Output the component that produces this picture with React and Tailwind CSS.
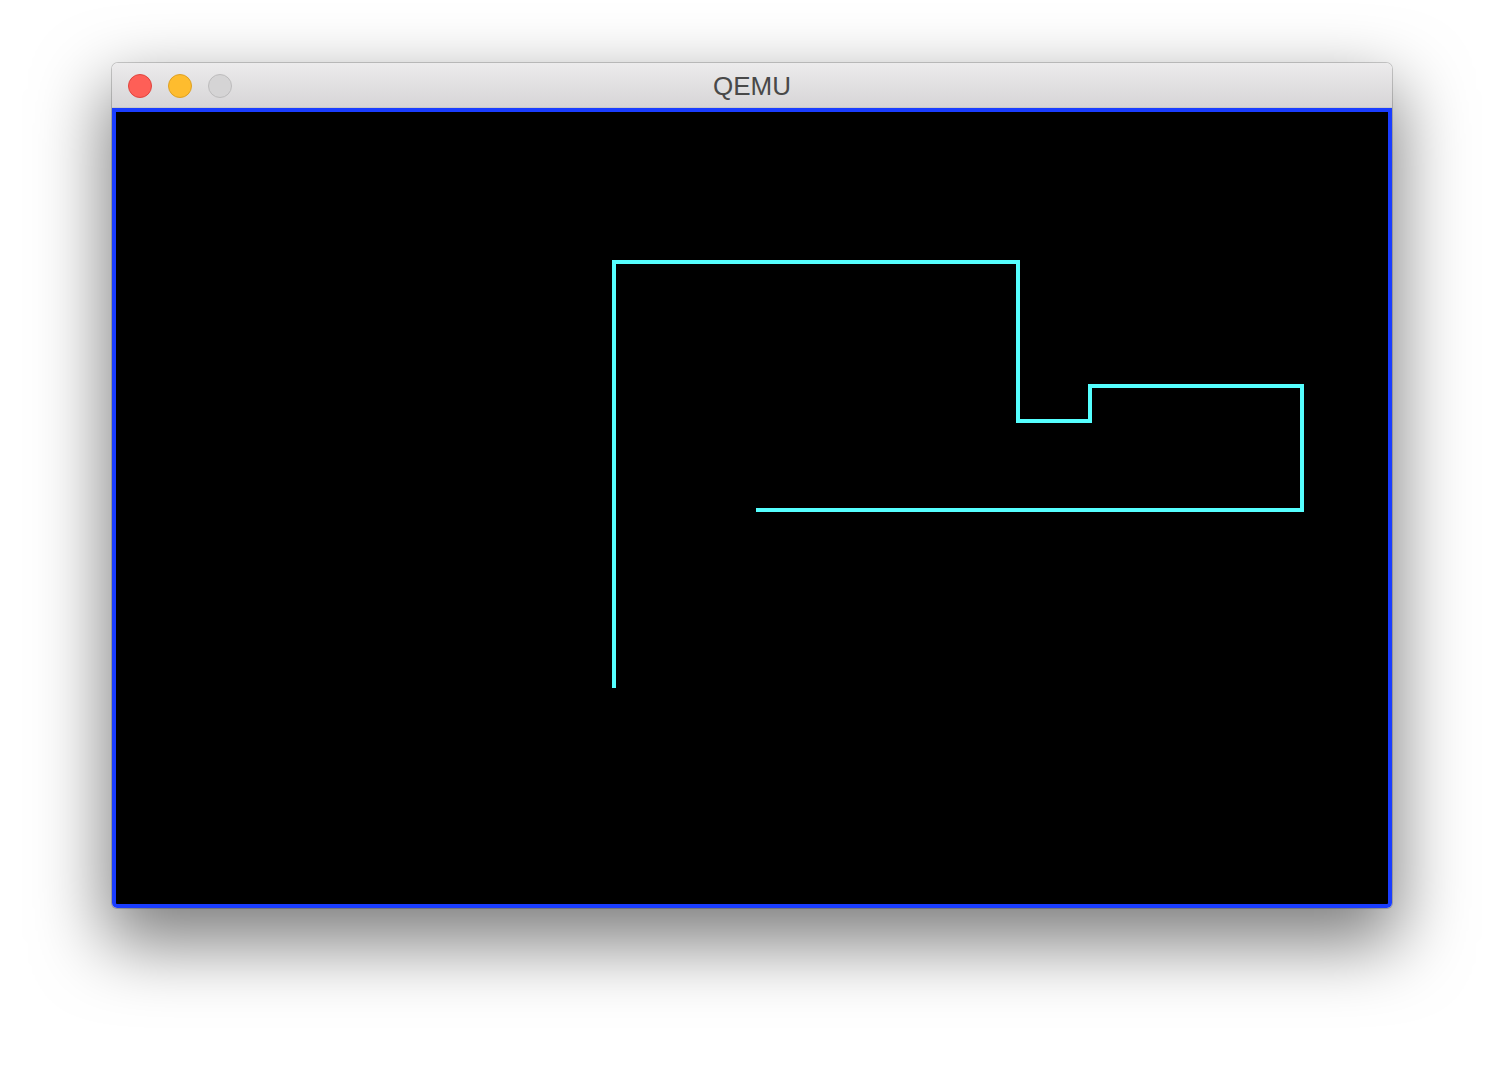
export default function App() {
  const rects = [
    [496, 148, 4, 428],
    [496, 148, 408, 4],
    [900, 148, 4, 163],
    [900, 307, 76, 4],
    [972, 272, 4, 39],
    [972, 272, 216, 4],
    [1184, 272, 4, 128],
    [640, 396, 548, 4],
  ];
  return (
    <div className="w-[1504px] h-[1068px] bg-white overflow-hidden flex flex-col pl-[112px] pt-[63px]">
      <div className="w-[1280px] flex flex-col rounded-t-[6px] rounded-b-[5px] shadow-[0_0_0_1px_rgba(0,0,0,0.18),0_30px_70px_6px_rgba(0,0,0,0.5)]">
        <div className="h-[45px] relative flex items-center rounded-t-[6px] bg-gradient-to-b from-[#ecebec] to-[#d7d5d7] border-b border-[#c8c8c8]">
          <div className="flex items-center gap-[16px] pl-[16px] pt-[1px]">
            <div className="w-[24px] h-[24px] rounded-full bg-[#fe5f57] border border-[#e0443e]" />
            <div className="w-[24px] h-[24px] rounded-full bg-[#febc2e] border border-[#dea123]" />
            <div className="w-[24px] h-[24px] rounded-full bg-[#d5d4d5] border border-[#bdbcbd]" />
          </div>
          <div
            className="absolute inset-0 flex items-center justify-center text-[26px] text-[#494949] pt-[3px]"
            style={{ fontFamily: '"Liberation Sans", Arial, sans-serif' }}
          >
            QEMU
          </div>
        </div>
        <div className="h-[800px] border-4 border-[#1a3dff] bg-black rounded-b-[5px] overflow-hidden">
          <svg width="1272" height="792" viewBox="0 0 1272 792" className="block" shapeRendering="crispEdges">
            {rects.map(([x, y, w, h], i) => (
              <rect key={i} x={x} y={y} width={w} height={h} fill="#55ffff" />
            ))}
          </svg>
        </div>
      </div>
    </div>
  );
}
